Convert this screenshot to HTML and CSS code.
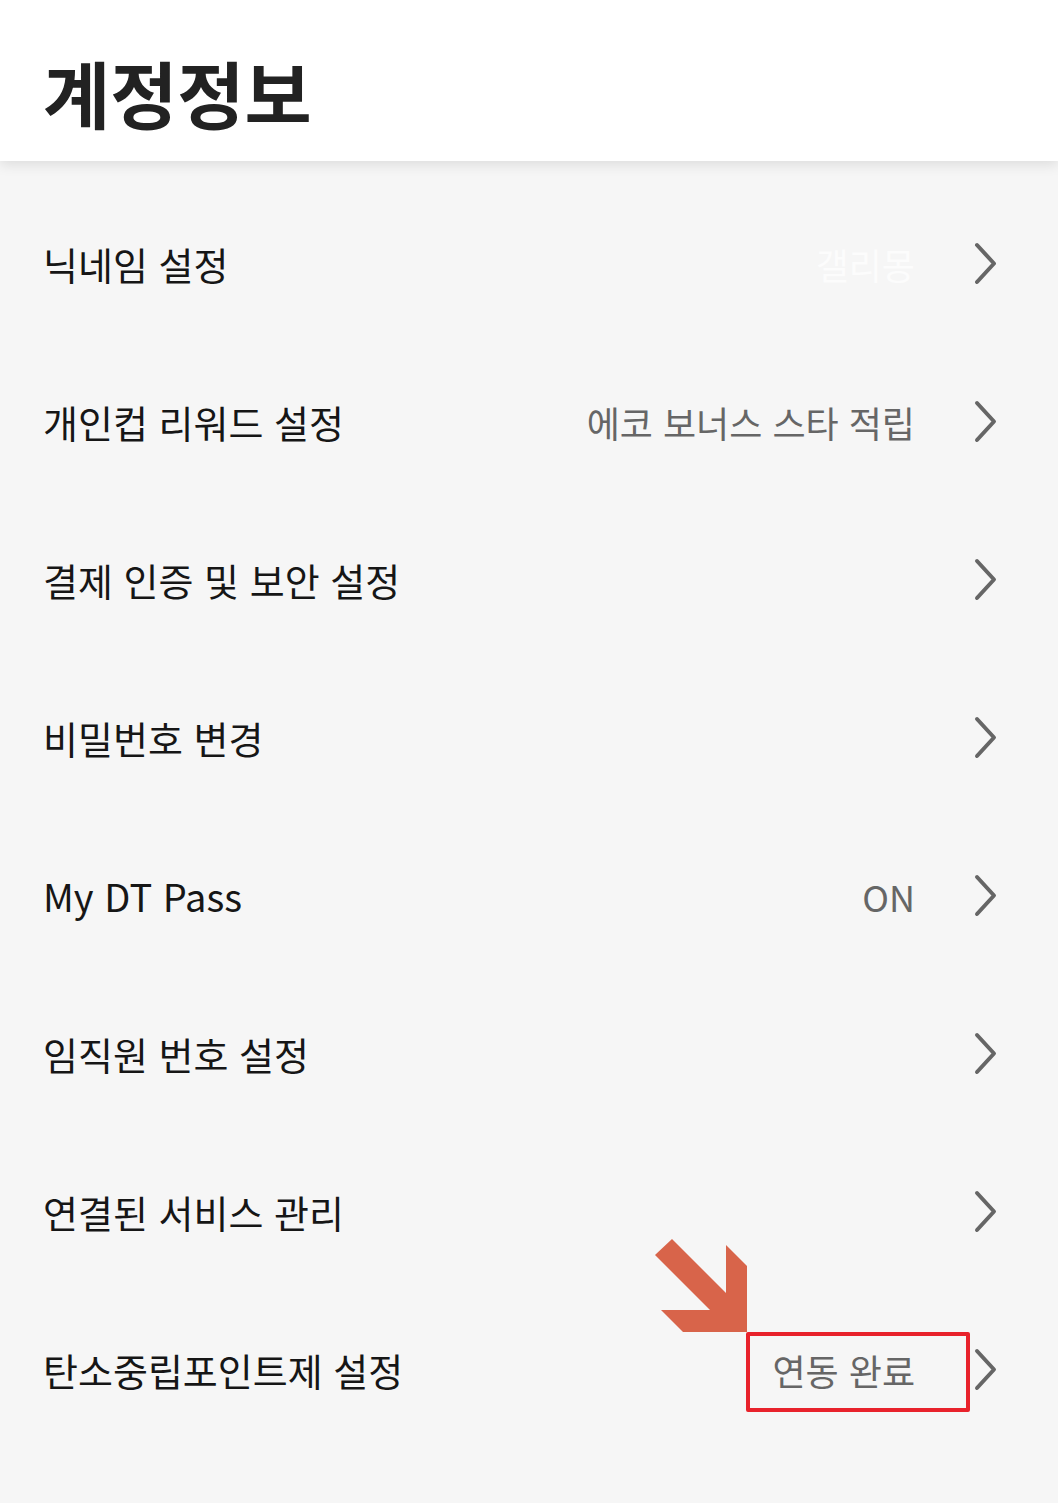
FILE: index.html
```html
<!DOCTYPE html>
<html lang="ko">
<head>
<meta charset="utf-8">
<title>계정정보</title>
<link rel="stylesheet" href="styles.css">
</head>
<body>
<div class="page">
  <header class="header">
    <h1 class="title">계정정보</h1>
  </header>
  <ul class="menu">
    <li class="row">
      <span class="label">닉네임 설정</span>
      <span class="value faint">갤리몽</span>
      <svg class="chev" viewBox="0 0 24 44"><path d="M4 3 L21 21.5 L4 40"/></svg>
    </li>
    <li class="row">
      <span class="label">개인컵 리워드 설정</span>
      <span class="value">에코 보너스 스타 적립</span>
      <svg class="chev" viewBox="0 0 24 44"><path d="M4 3 L21 21.5 L4 40"/></svg>
    </li>
    <li class="row">
      <span class="label">결제 인증 및 보안 설정</span>
      <svg class="chev" viewBox="0 0 24 44"><path d="M4 3 L21 21.5 L4 40"/></svg>
    </li>
    <li class="row">
      <span class="label">비밀번호 변경</span>
      <svg class="chev" viewBox="0 0 24 44"><path d="M4 3 L21 21.5 L4 40"/></svg>
    </li>
    <li class="row">
      <span class="label">My DT Pass</span>
      <span class="value">ON</span>
      <svg class="chev" viewBox="0 0 24 44"><path d="M4 3 L21 21.5 L4 40"/></svg>
    </li>
    <li class="row">
      <span class="label">임직원 번호 설정</span>
      <svg class="chev" viewBox="0 0 24 44"><path d="M4 3 L21 21.5 L4 40"/></svg>
    </li>
    <li class="row">
      <span class="label">연결된 서비스 관리</span>
      <svg class="chev" viewBox="0 0 24 44"><path d="M4 3 L21 21.5 L4 40"/></svg>
    </li>
    <li class="row marked">
      <span class="label">탄소중립포인트제 설정</span>
      <span class="value">연동 완료</span>
      <svg class="chev" viewBox="0 0 24 44"><path d="M4 3 L21 21.5 L4 40"/></svg>
      <span class="highlight"></span>
      <svg class="pointer" viewBox="0 0 100 100"><polygon points="17,0 71,54 71,6 92,27 92,93 28,93 6,71 55,71 0,16"/></svg>
    </li>
  </ul>
</div>
</body>
</html>
```

FILE: styles.css
```css
* { box-sizing: border-box; }
html, body {
  margin: 0;
  padding: 0;
  background: #f6f6f6;
}
body {
  font-family: "Noto Sans CJK KR", "Noto Sans", sans-serif;
  color: #161616;
}
.page {
  width: 1058px;
  min-height: 1503px;
  background: #f6f6f6;
}
.header {
  position: relative;
  height: 161px;
  background: #ffffff;
  padding: 55px 0 0 43px;
  box-shadow: 0 4px 12px rgba(0, 0, 0, 0.1);
}
.title {
  margin: 0;
  font-size: 73px;
  line-height: 1;
  font-weight: 700;
  color: #222222;
  letter-spacing: 0;
}
.menu {
  list-style: none;
  margin: 0;
  padding: 24px 0 0 0;
}
.row {
  position: relative;
  display: flex;
  align-items: center;
  height: 158px;
  padding: 0 61px 0 43px;
  line-height: 1;
}
.label {
  flex: 1;
  font-size: 38px;
  color: #161616;
}
.value {
  font-size: 36px;
  color: #666666;
  margin-right: 58px;
}
.value.faint {
  color: #fcfcfc;
}
.chev {
  width: 24px;
  height: 44px;
  flex: none;
}
.chev path {
  fill: none;
  stroke: #666666;
  stroke-width: 4;
  stroke-linecap: round;
  stroke-linejoin: round;
}
.highlight {
  position: absolute;
  left: 746px;
  top: 41px;
  width: 224px;
  height: 80px;
  border: 4px solid #e8222b;
  border-radius: 2px;
}
.pointer {
  position: absolute;
  left: 655px;
  top: -52px;
  width: 100px;
  height: 100px;
}
.pointer polygon {
  fill: #d8644a;
}
```
